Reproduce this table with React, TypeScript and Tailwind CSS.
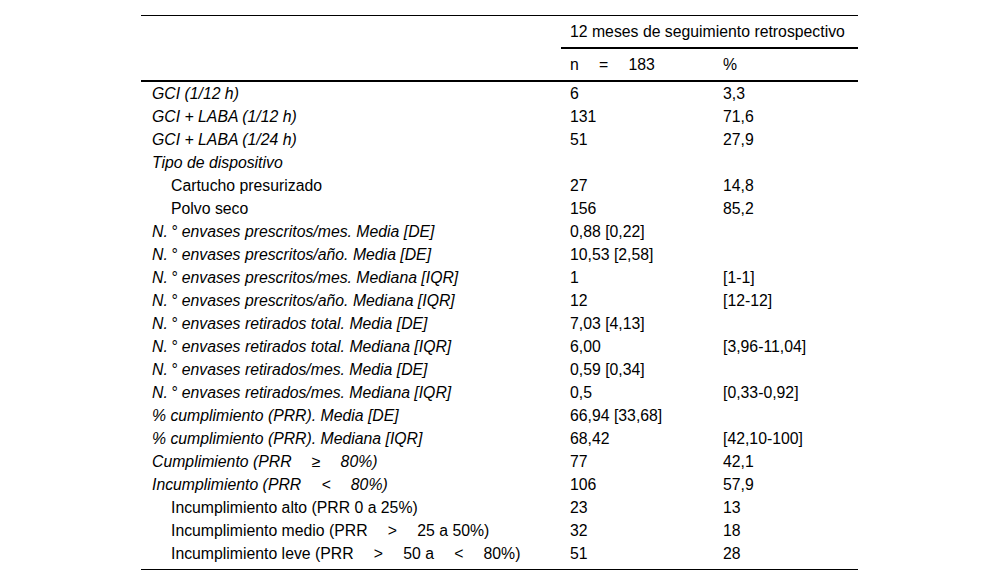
import React from 'react';

type Row = { label: string; n: string; pct: string; italic?: boolean; indent?: boolean };

// wide gap used around the relational signs, as in the source typesetting
const G = '\u2003 ';

const rows: Row[] = [
  { label: 'GCI (1/12 h)', n: '6', pct: '3,3', italic: true },
  { label: 'GCI + LABA (1/12 h)', n: '131', pct: '71,6', italic: true },
  { label: 'GCI + LABA (1/24 h)', n: '51', pct: '27,9', italic: true },
  { label: 'Tipo de dispositivo', n: '', pct: '', italic: true },
  { label: 'Cartucho presurizado', n: '27', pct: '14,8', indent: true },
  { label: 'Polvo seco', n: '156', pct: '85,2', indent: true },
  { label: 'N.\u2009° envases prescritos/mes. Media [DE]', n: '0,88 [0,22]', pct: '', italic: true },
  { label: 'N.\u2009° envases prescritos/año. Media [DE]', n: '10,53 [2,58]', pct: '', italic: true },
  { label: 'N.\u2009° envases prescritos/mes. Mediana [IQR]', n: '1', pct: '[1-1]', italic: true },
  { label: 'N.\u2009° envases prescritos/año. Mediana [IQR]', n: '12', pct: '[12-12]', italic: true },
  { label: 'N.\u2009° envases retirados total. Media [DE]', n: '7,03 [4,13]', pct: '', italic: true },
  { label: 'N.\u2009° envases retirados total. Mediana [IQR]', n: '6,00', pct: '[3,96-11,04]', italic: true },
  { label: 'N.\u2009° envases retirados/mes. Media [DE]', n: '0,59 [0,34]', pct: '', italic: true },
  { label: 'N.\u2009° envases retirados/mes. Mediana [IQR]', n: '0,5', pct: '[0,33-0,92]', italic: true },
  { label: '% cumplimiento (PRR). Media [DE]', n: '66,94 [33,68]', pct: '', italic: true },
  { label: '% cumplimiento (PRR). Mediana [IQR]', n: '68,42', pct: '[42,10-100]', italic: true },
  { label: `Cumplimiento (PRR${G}≥${G}80%)`, n: '77', pct: '42,1', italic: true },
  { label: `Incumplimiento (PRR${G}<${G}80%)`, n: '106', pct: '57,9', italic: true },
  { label: 'Incumplimiento alto (PRR 0 a 25%)', n: '23', pct: '13', indent: true },
  { label: `Incumplimiento medio (PRR${G}>${G}25 a 50%)`, n: '32', pct: '18', indent: true },
  { label: `Incumplimiento leve (PRR${G}>${G}50 a${G}<${G}80%)`, n: '51', pct: '28', indent: true },
];

export default function App() {
  return (
    <div className="w-[1000px] h-[586px] bg-white text-black font-['Liberation_Sans',Arial,sans-serif] text-[15.8px] leading-[23px] overflow-hidden">
      <div className="pt-[15px] pl-[141px]">
        <table className="w-[717px] border-collapse table-fixed">
          <colgroup>
            <col className="w-[420px]" />
            <col className="w-[153px]" />
            <col className="w-[144px]" />
          </colgroup>
          <thead>
            <tr className="border-t border-black">
              <th className="h-[32px]" />
              <th colSpan={2} className="h-[32px] font-normal text-left pl-[9px] border-b-2 border-black align-middle">
                12 meses de seguimiento retrospectivo
              </th>
            </tr>
            <tr className="border-b-2 border-black">
              <th className="h-[33px]" />
              <th className="font-normal text-left pl-[9px] align-middle whitespace-pre">n{G}={G}183</th>
              <th className="font-normal text-left pl-[9px] align-middle">%</th>
            </tr>
          </thead>
          <tbody className="border-b border-black">
            {rows.map((r, i) => (
              <tr key={i} className="h-[23px]">
                <td className={`${r.italic ? 'italic' : ''} ${r.indent ? 'pl-[30px]' : 'pl-[11px]'} whitespace-pre`}>{r.label}</td>
                <td className="pl-[9px]">{r.n}</td>
                <td className="pl-[9px]">{r.pct}</td>
              </tr>
            ))}
            <tr className="h-[5px]"><td colSpan={3} /></tr>
          </tbody>
        </table>
      </div>
    </div>
  );
}
